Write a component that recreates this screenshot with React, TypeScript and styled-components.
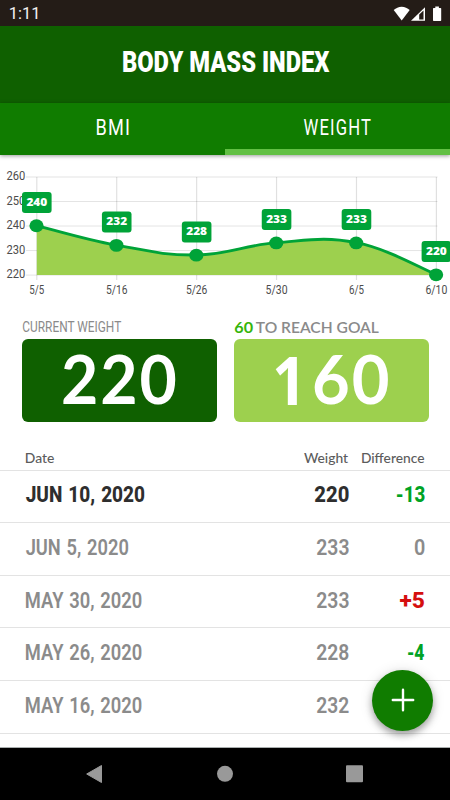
import React, { useLayoutEffect, useRef, useState } from "react";
import styled, { createGlobalStyle } from "styled-components";

const GlobalStyle = createGlobalStyle`
  * { box-sizing: border-box; }
  body { margin: 0; background: #fff; font-family: Roboto, "Noto Sans", sans-serif; }
`;

/* ---------- condensed text ---------- */

const FitBox = styled.span<{ $width: number }>`
  display: inline-block;
  width: ${(p) => p.$width}px;
  white-space: nowrap;
  text-align: left;
`;

const FitInner = styled.span`
  display: inline-block;
  transform-origin: 0 50%;
`;

/* Condenses a run of text so that its ink spans the given width. */
function Fit({ width, children }: { width: number; children: string }) {
  const ref = useRef<HTMLSpanElement>(null);
  const [transform, setTransform] = useState("none");
  useLayoutEffect(() => {
    const ctx = document.createElement("canvas").getContext("2d");
    if (!ref.current || !ctx) return;
    const cs = getComputedStyle(ref.current);
    const zoom = 10;
    ctx.font = `${cs.fontWeight} ${parseFloat(cs.fontSize) * zoom}px ${cs.fontFamily}`;
    const m = ctx.measureText(children);
    const left = m.actualBoundingBoxLeft / zoom;
    const right = m.actualBoundingBoxRight / zoom;
    const spacing =
      (parseFloat(cs.letterSpacing) || 0) * (children.length - 1) +
      (parseFloat(cs.wordSpacing) || 0) * (children.split(" ").length - 1);
    const scale = width / (left + right + spacing);
    setTransform(`translateX(${left * scale}px) scaleX(${scale})`);
  }, [width, children]);
  return (
    <FitBox $width={width}>
      <FitInner ref={ref} style={{ transform }}>
        {children}
      </FitInner>
    </FitBox>
  );
}

/* ---------- frame ---------- */

const Screen = styled.div`
  width: 450px;
  height: 800px;
  display: flex;
  flex-direction: column;
  overflow: hidden;
  background: #fff;
`;

const StatusBar = styled.div`
  flex: none;
  height: 26px;
  padding: 1px 8px 0 9.5px;
  display: flex;
  align-items: center;
  justify-content: space-between;
  background: #241c17;
  color: #f2f2f2;
  font: 400 16px/27px Roboto, sans-serif;
`;

const StatusIcons = styled.svg`
  display: block;
  width: 50px;
  height: 16px;
`;

const Header = styled.header`
  flex: none;
  height: 77px;
  padding: 0 0 6px 2px;
  display: flex;
  align-items: center;
  justify-content: center;
  background: #0f6000;
  color: #fff;
  font-size: 28.8px;
  font-weight: 900;
  line-height: 40px;
`;

const Tabs = styled.nav`
  flex: none;
  position: relative;
  z-index: 1;
  height: 52px;
  display: grid;
  grid-template-columns: 1fr 1fr;
  background: #107c00;
  box-shadow: 0 1px 4px rgba(0, 0, 0, 0.4);
`;

const Tab = styled.div<{ $active?: boolean }>`
  display: flex;
  justify-content: center;
  align-items: center;
  padding-top: 3px;
  border-bottom: 6px solid ${(p) => (p.$active ? "#62c044" : "transparent")};
  color: #fff;
  font-size: 22px;
  font-weight: 400;
  line-height: 30px;
  letter-spacing: 1.5px;
`;

/* ---------- chart ---------- */

const ChartPanel = styled.section`
  flex: none;
  height: 155px;
`;

const ChartSvg = styled.svg`
  display: block;
  width: 450px;
  height: 155px;
`;

const AxisText = styled.text`
  font: 400 12px Roboto, sans-serif;
  fill: #4c4c4c;
`;

const BadgeText = styled.text`
  font: 800 10.8px "Open Sans", sans-serif;
  fill: #fff;
`;

const points = [
  { date: "5/5", weight: 240, len: 15 },
  { date: "5/16", weight: 232, len: 21.5 },
  { date: "5/26", weight: 228, len: 21.5 },
  { date: "5/30", weight: 233, len: 22 },
  { date: "6/5", weight: 233, len: 15 },
  { date: "6/10", weight: 220, len: 22 },
].map((p, i) => ({ ...p, x: 36.8 + i * 79.92, y: 119.6 - (p.weight - 220) * 2.452 }));

const curve = points
  .map((p, i) => {
    if (i === 0) return `M${p.x} ${p.y}`;
    const a = points[i - 1];
    const before = points[Math.max(i - 2, 0)];
    const after = points[Math.min(i + 1, points.length - 1)];
    const c1 = `${a.x + (p.x - before.x) * 0.2} ${a.y + (p.y - before.y) * 0.2}`;
    const c2 = `${p.x - (after.x - a.x) * 0.2} ${p.y - (after.y - a.y) * 0.2}`;
    return `C${c1} ${c2} ${p.x} ${p.y}`;
  })
  .join(" ");

function Chart() {
  const last = points[points.length - 1];
  return (
    <ChartPanel>
      <ChartSvg viewBox="0 0 450 155">
        {points.map((p) => (
          <line key={p.date} x1={p.x} x2={p.x} y1={22} y2={125} stroke="#000" strokeOpacity={0.12} strokeWidth={1.2} />
        ))}
        {[260, 250, 240, 230, 220].map((v, i) => (
          <g key={v}>
            <line x1={26} x2={437.5} y1={22 + i * 24.52} y2={22 + i * 24.52} stroke="#000" strokeOpacity={0.11} />
            <AxisText x={6.5} y={25.3 + i * 24.52} textLength={18.8} lengthAdjust="spacingAndGlyphs">
              {v}
            </AxisText>
          </g>
        ))}
        <path d={`${curve} L${last.x} 120 L${points[0].x} 120 Z`} fill="#9dd04e" />
        <path d={curve} fill="none" stroke="#00a338" strokeWidth={2.8} />
        {points.map((p) => (
          <g key={p.date}>
            <AxisText x={p.x - p.len / 2} y={138.8} textLength={p.len} lengthAdjust="spacingAndGlyphs">
              {p.date}
            </AxisText>
            <ellipse cx={p.x - 0.3} cy={p.y + 0.2} rx={7.1} ry={6.4} fill="#00a338" />
            <rect x={p.x - 14.8} y={p.y - 33.6} width={29.6} height={21} rx={3} fill="#00a338" />
            <BadgeText x={p.x - 10.4} y={p.y - 19.8} textLength={20.8} lengthAdjust="spacingAndGlyphs">
              {p.weight}
            </BadgeText>
          </g>
        ))}
      </ChartSvg>
    </ChartPanel>
  );
}

/* ---------- summary cards ---------- */

const Summary = styled.section`
  flex: none;
  display: grid;
  grid-template-columns: 194.5px 195px;
  column-gap: 17.5px;
  padding: 7px 0 0 22px;
  height: 137px;
  align-content: start;
`;

const Caption = styled.div<{ $wide?: boolean }>`
  height: 22px;
  padding-left: 0.7px;
  display: flex;
  gap: 4px;
  color: #8a8a8a;
  font-family: ${(p) => (p.$wide ? "Lato" : "Roboto")}, sans-serif;
  font-size: 15.4px;
  font-weight: ${(p) => (p.$wide ? 600 : 400)};
  line-height: ${(p) => (p.$wide ? 20 : 21)}px;
`;

const Accent = styled.span`
  color: #36b50b;
  font-weight: 700;
`;

const Card = styled.div<{ $light?: boolean }>`
  height: 83px;
  border-radius: 6px;
  display: flex;
  align-items: center;
  justify-content: center;
  gap: 16px;
  background: ${(p) => (p.$light ? "#9dd04e" : "#0f6000")};
  color: #fff;
  font-family: Lato, sans-serif;
  font-size: 66px;
  font-weight: 700;
  line-height: 78px;
  letter-spacing: 2px;
  padding: 0 0 4px;
`;

const PlainOne = styled.span`
  font-family: "Open Sans", sans-serif;
  font-weight: 700;
`;

/* ---------- history table ---------- */

const History = styled.section`
  flex: 1;
  min-height: 0;
  overflow: hidden;
  border-bottom: 1px solid #a9aeae;
`;

const Row = styled.div<{ $head?: boolean; $latest?: boolean }>`
  display: grid;
  grid-template-columns: 1fr 88px 76px;
  align-items: center;
  justify-items: end;
  height: ${(p) => (p.$head ? 23.6 : 52.6)}px;
  padding: 0 26px ${(p) => (p.$head ? 1 : 4)}px 26.4px;
  border-bottom: 1px solid #e3e3e3;
  color: ${(p) => (p.$head ? "#5c5c5c" : p.$latest ? "#2e2e2e" : "#8b8b8b")};
  font-family: ${(p) => (p.$head ? "Lato" : "Roboto")}, sans-serif;
  font-size: ${(p) => (p.$head ? 13.5 : 22.5)}px;
  font-weight: ${(p) => (p.$head ? 500 : p.$latest ? 800 : 600)};
  line-height: ${(p) => (p.$head ? 18 : 28)}px;
  word-spacing: 1.5px;

  & > :first-child {
    justify-self: start;
  }
`;

const Cell = styled.div<{ $tone?: "down" | "up" }>`
  color: ${(p) => (p.$tone === "down" ? "#00a325" : p.$tone === "up" ? "#d50f0f" : "inherit")};
  font-weight: ${(p) => (p.$tone ? 800 : "inherit")};
`;

type Entry = {
  date: string;
  dateWidth: number;
  weight: string;
  weightWidth: number;
  diff?: string;
  diffWidth?: number;
  tone?: "down" | "up";
};

const entries: Entry[] = [
  { date: "JUN 10, 2020", dateWidth: 118.2, weight: "220", weightWidth: 33.5, diff: "-13", diffWidth: 27.5, tone: "down" },
  { date: "JUN 5, 2020", dateWidth: 102, weight: "233", weightWidth: 31.5, diff: "0", diffWidth: 9.5 },
  { date: "MAY 30, 2020", dateWidth: 115.3, weight: "233", weightWidth: 31.5, diff: "+5", diffWidth: 24, tone: "up" },
  { date: "MAY 26, 2020", dateWidth: 115.3, weight: "228", weightWidth: 31.5, diff: "-4", diffWidth: 16, tone: "down" },
  { date: "MAY 16, 2020", dateWidth: 115.3, weight: "232", weightWidth: 31.5 },
];

/* ---------- floating button and navigation ---------- */

const AddButton = styled.button`
  position: absolute;
  left: 372px;
  top: 669.5px;
  width: 61px;
  height: 61px;
  padding: 0;
  border: 0;
  border-radius: 50%;
  display: grid;
  place-items: center;
  background: #107c00;
  box-shadow: 0 4px 7px rgba(0, 0, 0, 0.32), 0 1px 14px rgba(0, 0, 0, 0.12);
`;

const NavBar = styled.div`
  flex: none;
  height: 52px;
  background: #000;
`;

const NavIcons = styled.svg`
  display: block;
  width: 450px;
  height: 52px;
`;

export default function App() {
  return (
    <Screen>
      <GlobalStyle />
      <StatusBar>
        <Fit width={27}>1:11</Fit>
        <StatusIcons viewBox="0 0 50 16">
          <path d="M1.7 4.1C4 2.1 6.6 .8 9.7 .8s5.700 1.300 8 3.300L9.700 14.400Z" fill="#fff" />
          <path d="M19 14.700L33 1.200V14.700Z" fill="#fff" />
          <path d="M27.200 8.500L31.500 4.500V13.400H27.200Z" fill="#241c17" />
          <path d="M43.300 .6h3.600v1.300h1.600q.7 0 .7.700v11.700q0 .7-.7.700h-6.800q-.7 0-.7-.7V2.600q0-.7.7-.7h1.600Z" fill="#fff" />
        </StatusIcons>
      </StatusBar>
      <Header>
        <Fit width={206.5}>BODY MASS INDEX</Fit>
      </Header>
      <Tabs>
        <Tab>
          <Fit width={31.5}>BMI</Fit>
        </Tab>
        <Tab $active>
          <Fit width={66.5}>WEIGHT</Fit>
        </Tab>
      </Tabs>
      <Chart />
      <Summary>
        <Caption>
          <Fit width={98.3}>CURRENT WEIGHT</Fit>
        </Caption>
        <Caption $wide>
          <Accent>
            <Fit width={17.8}>60</Fit>
          </Accent>
          <Fit width={122.8}>TO REACH GOAL</Fit>
        </Caption>
        <Card>
          <Fit width={112.7}>220</Fit>
        </Card>
        <Card $light>
          <PlainOne>
            <Fit width={22.3}>1</Fit>
          </PlainOne>
          <Fit width={74.3}>60</Fit>
        </Card>
      </Summary>
      <History>
        <Row $head>
          <Cell>
            <Fit width={28}>Date</Fit>
          </Cell>
          <Cell>
            <Fit width={44}>Weight</Fit>
          </Cell>
          <Cell>
            <Fit width={62}>Difference</Fit>
          </Cell>
        </Row>
        {entries.map((e, i) => (
          <Row key={e.date} $latest={i === 0}>
            <Cell>
              <Fit width={e.dateWidth}>{e.date}</Fit>
            </Cell>
            <Cell>
              <Fit width={e.weightWidth}>{e.weight}</Fit>
            </Cell>
            {e.diff && (
              <Cell $tone={e.tone}>
                <Fit width={e.diffWidth!}>{e.diff}</Fit>
              </Cell>
            )}
          </Row>
        ))}
      </History>
      <AddButton aria-label="Add weight">
        <svg width="24" height="24" viewBox="0 0 24 24">
          <path d="M1.800 12H22.200M12 1.800V22.200" stroke="#fff" strokeWidth="2.400" strokeLinecap="round" />
        </svg>
      </AddButton>
      <NavBar>
        <NavIcons viewBox="0 0 450 52">
          <path d="M86.700 26L101.500 17.500V34.500Z" fill="#999" stroke="#999" strokeLinejoin="round" />
          <circle cx="225" cy="25.800" r="8" fill="#999" />
          <rect x="346" y="17.200" width="17" height="17" rx="1" fill="#999" />
        </NavIcons>
      </NavBar>
    </Screen>
  );
}
